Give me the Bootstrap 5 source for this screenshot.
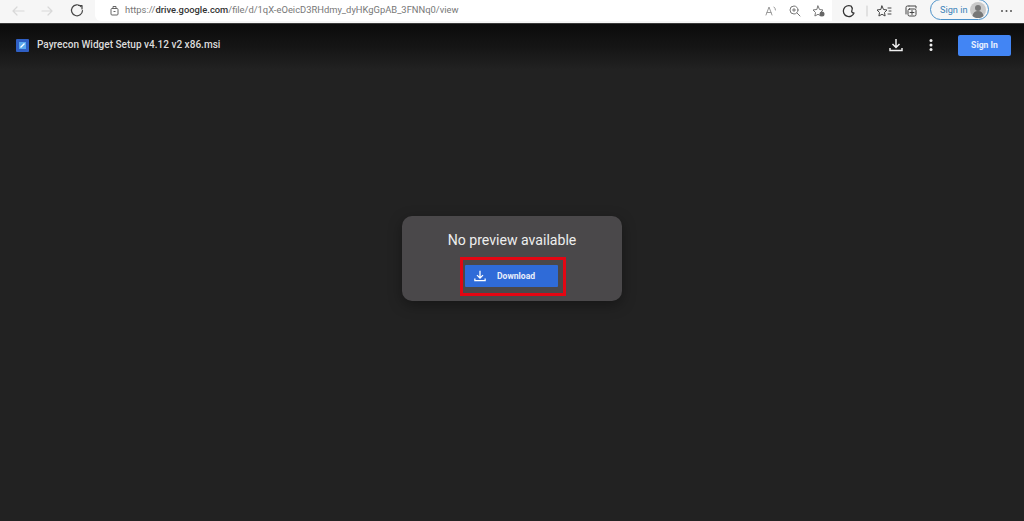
<!DOCTYPE html>
<html lang="en">
<head>
  <meta charset="UTF-8">
  <title>Payrecon Widget Setup v4.12 v2 x86.msi</title>
  <link href="https://cdn.jsdelivr.net/npm/bootstrap@5.3.3/dist/css/bootstrap.min.css" rel="stylesheet">
  <style>
    html,body{height:521px;overflow:hidden;}
    body{background:#222222;font-family:"Roboto","Liberation Sans",sans-serif;}
    .chrome-bar{height:24px;background:#f6f6f6;border-bottom:1px solid #3a3a3a;}
    .chrome-ico{flex:none;display:block;}
    .addr-field{width:737px;height:21px;background:#fff;border-radius:0 0 0 6px;padding-left:15px;font-size:9.4px;color:#777;white-space:nowrap;}
    .addr-field b{font-weight:500;color:#333;}
    .lock-ico{margin-right:6px;}
    .signin-pill{width:59px;height:21px;margin-top:-1px;border:1px solid #4a90c8;border-radius:11px;font-size:9.2px;color:#3b82b8;padding-left:9px;white-space:nowrap;}
    .avatar-ico{margin-right:2px;}
    .dots-ico{margin-left:8px;}
    .viewer-bar{height:46px;padding:0 13px 4px 16px;background:linear-gradient(#0b0b0b,#151515 50%,#222222);}
    .file-title{font-size:10.05px;font-weight:500;color:#dcdcdc;margin-left:8px;white-space:nowrap;}
    .kebab-ico{margin:0 25px 0 26px;}
    .signin-btn{width:53px;height:21px;background:#4285f4;color:#e8f0fe;font-size:8.6px;font-weight:700;border-radius:2px;}
    .stage{height:451px;padding-top:146px;}
    .preview-box{width:220px;height:85px;background:#4a484a;border-radius:10px;padding-top:15px;box-shadow:0 4px 14px rgba(0,0,0,.35);}
    .preview-title{font-size:14.1px;line-height:18px;color:#eeeeee;margin-bottom:8px;}
    .red-frame{width:106px;height:39px;margin-left:2px;border:3px solid #e30613;padding:5px 0 0 2px;}
    .dl-btn{width:93px;height:22px;background:#2f6bd8;color:#e8eefb;font-size:8.6px;font-weight:700;padding-left:9px;gap:11px;border-radius:1px;}
  </style>
</head>
<body>

<div class="chrome-bar d-flex align-items-start">
  <svg class="chrome-ico" width="95" height="23" viewBox="0 0 95 23" fill="none" stroke-linecap="round" stroke-linejoin="round">
    <path d="M13 11H24M13 11l4-4M13 11l4 4" stroke="#d8d8d8" stroke-width="1.2"/>
    <path d="M42 11H52M52 11l-4-4M52 11l-4 4" stroke="#d8d8d8" stroke-width="1.2"/>
    <path d="M81 6.5a5.5 5.5 0 1 0 1.5 4" stroke="#444" stroke-width="1.2"/>
    <path d="M78.5 5.500h3.500V9" stroke="#444" stroke-width="1.2"/>
  </svg>
  <div class="addr-field d-flex align-items-center">
    <svg class="chrome-ico lock-ico" width="9" height="11" viewBox="0 0 9 11" fill="none" stroke="#666"><rect x="1" y="3.5" width="7" height="6.5" rx="1"/><path d="M3 3.5V1.500h3v2"/><path d="M3.500 6.500h2"/></svg>
    <span>https://<b>drive.google.com</b>/file/d/1qX-eOeicD3RHdmy_dyHKgGpAB_3FNNq0/view</span>
    <svg class="chrome-ico ms-auto" width="72" height="21" viewBox="760 0 72 21" fill="none" stroke="#777" stroke-width="1" stroke-linecap="round" stroke-linejoin="round">
      <path d="M766 15l3-8 3 8M767 12.500h4M774 7a4 4 0 0 1 1.500 3" stroke="#999"/>
      <circle cx="794" cy="10" r="4"/><path d="M797 13l3 3M792.500 10h3M794 8.500v3"/>
      <path d="M818 6l1.500 3.500 3.500.5-2.500 2.500.6 3.500-3.100-1.700-3.100 1.700.6-3.500-2.500-2.500 3.500-.5z"/>
      <circle cx="822" cy="14" r="2.500" fill="#666" stroke="none"/>
    </svg>
  </div>
  <svg class="chrome-ico" width="98" height="23" viewBox="832 0 98 23" fill="none" stroke="#444" stroke-width="1" stroke-linecap="round" stroke-linejoin="round">
    <path d="M851 6a5.500 5.500 0 1 0 3 7c-1.500 0-3-1-2-3 .7-1.500 0-3-1-4z" stroke="#333" stroke-width="1.300"/>
    <path d="M867 6v10" stroke="#ccc"/>
    <path d="M882 6l1.500 3.500 3.500.5-2.500 2.500.6 3.500-3.100-1.700-3.100 1.700.6-3.500-2.500-2.500 3.500-.5zM888 8h3M889 11h2M888 14h3"/>
    <path d="M909 6h7v2M909 6h-1.500a1.500 1.500 0 0 0-1.500 1.500V14"/><rect x="908" y="9" width="8" height="7" rx="1.500"/><path d="M912 10.500v4M910 12.500h4"/>
  </svg>
  <div class="signin-pill d-flex align-items-center justify-content-between">
    <span>Sign in</span>
    <svg class="chrome-ico avatar-ico" width="16" height="16" viewBox="0 0 16 16"><circle cx="8" cy="8" r="8" fill="#c9c9c9"/><circle cx="8" cy="6" r="3" fill="#777"/><path d="M2.500 14c.5-3.500 2.500-5 5.500-5s5 1.500 5.500 5a8 8 0 0 1-11 0z" fill="#777"/></svg>
  </div>
  <svg class="chrome-ico dots-ico" width="18" height="23" viewBox="0 0 18 23" fill="#555"><circle cx="5" cy="11" r="1"/><circle cx="9.500" cy="11" r="1"/><circle cx="14" cy="11" r="1"/></svg>
</div>

<div class="viewer-bar d-flex align-items-center">
  <svg class="chrome-ico" width="13" height="13" viewBox="0 0 13 13"><rect width="13" height="13" rx="1" fill="#2f5fc4"/><rect x="3" y="3" width="7" height="7" fill="#5aa9ee"/><path d="M4.500 8.500l4-4" stroke="#fff" stroke-width="1.200"/></svg>
  <span class="file-title">Payrecon Widget Setup v4.12 v2 x86.msi</span>
  <svg class="chrome-ico ms-auto" width="14" height="14" viewBox="0 0 14 14" fill="none" stroke="#f0f0f0" stroke-width="1.500"><path d="M7 1v8M3.500 6L7 9.500 10.500 6M1 10v2.500h12V10"/></svg>
  <svg class="chrome-ico kebab-ico" width="4" height="14" viewBox="0 0 4 14" fill="#f0f0f0"><circle cx="2" cy="2.500" r="1.500"/><circle cx="2" cy="7" r="1.500"/><circle cx="2" cy="11.500" r="1.500"/></svg>
  <div class="signin-btn d-flex align-items-center justify-content-center">Sign In</div>
</div>

<div class="stage d-flex justify-content-center align-items-start">
  <div class="preview-box d-flex flex-column align-items-center">
    <div class="preview-title">No preview available</div>
    <div class="red-frame">
      <div class="dl-btn d-flex align-items-center">
        <svg class="chrome-ico" width="12" height="12" viewBox="0 0 14 14" fill="none" stroke="#fff" stroke-width="1.500"><path d="M7 1v8M3.500 6L7 9.500 10.500 6M1 10v2.500h12V10"/></svg>
        <span>Download</span>
      </div>
    </div>
  </div>
</div>

</body>
</html>
